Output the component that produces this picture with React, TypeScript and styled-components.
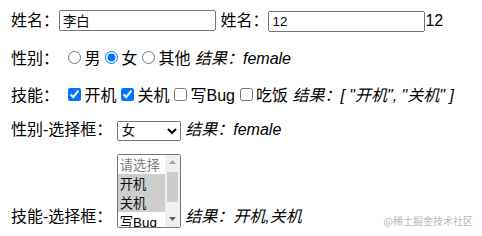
import React, { useState } from "react";
import styled, { createGlobalStyle } from "styled-components";

const Global = createGlobalStyle`
  body {
    margin: 10px 8px 8px 11px;
    font-family: "Liberation Sans", "Noto Sans CJK SC", sans-serif;
    font-size: 16px;
    line-height: 21px;
    color: #000;
    background: #fff;
  }
  input, select {
    font-family: "Liberation Sans", "Noto Sans CJK SC", sans-serif;
  }
`;

const FirstRow = styled.div`
  line-height: 21px;
`;

const Row = styled.p<{ $top?: number }>`
  margin: ${(p) => p.$top ?? 16}px 0 0 0;
  line-height: 21px;
`;

const TextInput = styled.input`
  font-size: 13.33px;
  width: 157px;
  height: 21px;
  box-sizing: border-box;
  padding: 1px 2px;
  margin: 0;
`;

const Result = styled.i`
  font-style: italic;
`;

const Choice = styled.input`
  margin: 3px 3px 0 5px;
`;

const SingleSelect = styled.select`
  font-size: 13.33px;
  width: 64px;
  height: 20px;
`;

const ListWrap = styled.span`
  display: inline-block;
  position: relative;
  line-height: 0;
  vertical-align: -3px;
`;

const MultiSelect = styled.select`
  font-size: 13.33px;
  width: 64px;
  height: 74px;
  padding: 0;
  margin: 0;
  option {
    padding: 0 2px;
  }
`;

const Scrollbar = styled.span`
  position: absolute;
  top: 1px;
  right: 1px;
  width: 15px;
  height: 72px;
  background: #f0f0f0;
  display: flex;
  flex-direction: column;
  align-items: center;
`;

const ArrowBox = styled.span`
  width: 15px;
  height: 15px;
  display: flex;
  align-items: center;
  justify-content: center;
`;

const Thumb = styled.span`
  width: 11px;
  height: 30px;
  margin-top: 2px;
  background: #cdcdcd;
`;

const Spacer = styled.span`
  flex: 1;
`;

const Watermark = styled.div`
  position: absolute;
  right: 9px;
  bottom: 9px;
  font-size: 10px;
  line-height: 12px;
  color: #b8b8b8;
  font-family: "Noto Sans CJK SC", sans-serif;
`;

const Arrow = ({ up }: { up?: boolean }) => (
  <ArrowBox>
    <svg width="7" height="4" viewBox="0 0 7 4">
      <polygon points={up ? "0,4 3.5,0 7,4" : "0,0 3.5,4 7,0"} fill={up ? "#a3a3a3" : "#606060"} />
    </svg>
  </ArrowBox>
);

export default function App() {
  const [name1, setName1] = useState("李白");
  const [name2, setName2] = useState("12");
  const [sex, setSex] = useState("female");
  const [skills, setSkills] = useState<string[]>(["开机", "关机"]);
  const [sex2, setSex2] = useState("female");
  const [skills2, setSkills2] = useState<string[]>(["开机", "关机"]);

  const toggle = (s: string) =>
    setSkills((prev) => (prev.includes(s) ? prev.filter((x) => x !== s) : [...prev, s]));

  return (
    <>
      <Global />
      <FirstRow>
        姓名：<TextInput value={name1} onChange={(e) => setName1(e.target.value)} /> 姓名：
        <TextInput value={name2} onChange={(e) => setName2(e.target.value)} />
        {name2}
      </FirstRow>
      <Row>
        性别： <Choice type="radio" name="sex" checked={sex === "male"} onChange={() => setSex("male")} />男
        <Choice type="radio" name="sex" checked={sex === "female"} onChange={() => setSex("female")} />女
        <Choice type="radio" name="sex" checked={sex === "other"} onChange={() => setSex("other")} />其他{" "}
        <Result>结果：{sex}</Result>
      </Row>
      <Row>
        技能： {["开机", "关机", "写Bug", "吃饭"].map((s) => (
          <React.Fragment key={s}>
            <Choice type="checkbox" checked={skills.includes(s)} onChange={() => toggle(s)} />
            {s}
          </React.Fragment>
        ))}{" "}
        <Result>结果：[ {skills.map((s) => `"${s}"`).join(", ")} ]</Result>
      </Row>
      <Row $top={13}>
        性别-选择框：{" "}
        <SingleSelect value={sex2} onChange={(e) => setSex2(e.target.value)}>
          <option value="male">男</option>
          <option value="female">女</option>
          <option value="other">其他</option>
        </SingleSelect>{" "}
        <Result>结果：{sex2}</Result>
      </Row>
      <Row $top={13}>
        技能-选择框：{" "}
        <ListWrap>
          <MultiSelect
            multiple
            value={skills2}
            onChange={(e) =>
              setSkills2(Array.from(e.target.selectedOptions).map((o) => o.value))
            }
          >
            <option value="" disabled>
              请选择
            </option>
            <option value="开机">开机</option>
            <option value="关机">关机</option>
            <option value="写Bug">写Bug</option>
            <option value="吃饭">吃饭</option>
          </MultiSelect>
          <Scrollbar>
            <Arrow up />
            <Thumb />
            <Spacer />
            <Arrow />
          </Scrollbar>
        </ListWrap>{" "}
        <Result>结果：{skills2.join(",")}</Result>
      </Row>
      <Watermark>@稀土掘金技术社区</Watermark>
    </>
  );
}
